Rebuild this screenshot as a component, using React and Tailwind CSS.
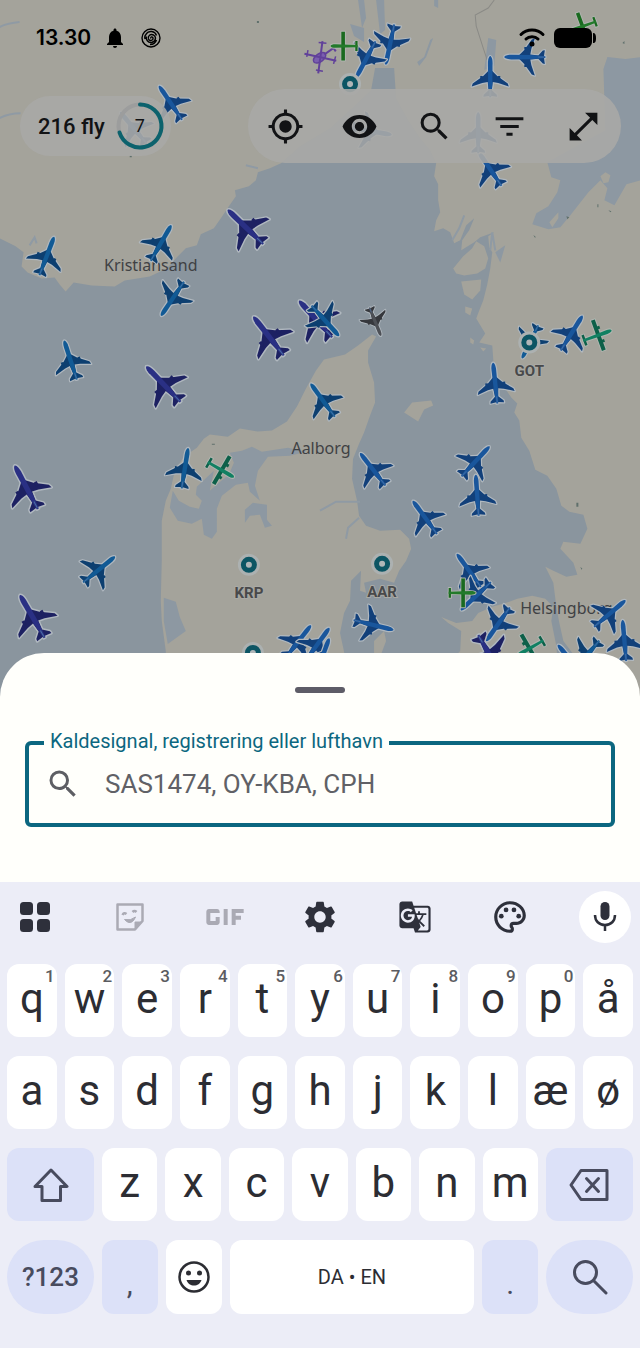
// flight map with the search sheet and keyboard open

import { useState } from 'react';
import {
  MdFilterList,
  MdGif,
  MdGpsFixed,
  MdGTranslate,
  MdNotifications,
  MdOpenInFull,
  MdOutlinePalette,
  MdSearch,
  MdSettings,
  MdVisibility,
} from 'react-icons/md';

const COLORS = {
  blue: { body: '#19569c', wing: '#12407a' },
  cyan: { body: '#115a95', wing: '#0d3f70' },
  indigo: { body: '#2a3084', wing: '#1d2162' },
  green: { body: '#118062', wing: '#0d6049' },
  lime: { body: '#237a2b', wing: '#1a6a20' },
  gray: { body: '#4d5056', wing: '#36383d' },
};

// x, y, heading in degrees, size, color
const JETS = [
  [171, 103, -34, 1, 'blue'],
  [246, 227, -46, 1.2, 'indigo'],
  [161, 243, 30, 1, 'cyan'],
  [47, 256, 21, 1, 'cyan'],
  [173, 298, 214, 1, 'cyan'],
  [71, 360, -18, 1, 'cyan'],
  [164, 384, -44, 1.2, 'indigo'],
  [269, 336, -38, 1.2, 'indigo'],
  [316, 319, -42, 1.2, 'indigo'],
  [325, 320, 138, 1, 'cyan'],
  [375, 321, 158, 0.75, 'gray'],
  [323, 400, -36, 1, 'cyan'],
  [185, 468, 9, 1, 'cyan'],
  [27, 487, -28, 1.2, 'indigo'],
  [33, 616, -30, 1.2, 'indigo'],
  [99, 569, 51, 1, 'cyan'],
  [373, 469, -38, 1, 'blue'],
  [475, 461, 43, 1, 'blue'],
  [477, 495, -4, 1, 'blue'],
  [425, 517, -36, 1, 'blue'],
  [469, 570, -36, 1, 'blue'],
  [476, 595, 227, 1, 'blue'],
  [498, 623, 215, 1, 'blue'],
  [373, 624, 104, 1, 'blue'],
  [490, 655, 150, 1.2, 'indigo'],
  [609, 613, 50, 1, 'blue'],
  [624, 640, -5, 1, 'blue'],
  [298, 641, 38, 1, 'blue'],
  [317, 644, 36, 1, 'blue'],
  [322, 657, 20, 1, 'blue'],
  [571, 660, -40, 1, 'blue'],
  [586, 655, 220, 1, 'cyan'],
  [495, 383, -6, 1, 'blue'],
  [530, 341, 206, 0.9, 'cyan'],
  [571, 333, 32, 1, 'blue'],
  [490, 77, 0, 1, 'blue'],
  [525, 57, 270, 1, 'blue'],
  [390, 44, 192, 1, 'blue'],
  [366, 59, 208, 1, 'blue'],
  [490, 169, -34, 1, 'blue'],
  [478, 133, 0, 1, 'blue'],
  [371, 131, 100, 1, 'blue'],
  [134, 128, -40, 1, 'blue'],
];

const PROPS = [
  [221, 469, 120, 1, 'green'],
  [597, 335, 70, 1, 'green'],
  [530, 647, 240, 1, 'green'],
  [462, 592, 90, 0.9, 'lime'],
  [344, 46, 270, 0.9, 'lime'],
  [583, 26, 250, 0.9, 'lime'],
];

const AIRPORTS = [
  { code: 'GOT', x: 529, y: 342, label: 375 },
  { code: 'KRP', x: 249, y: 564, label: 597 },
  { code: 'AAR', x: 382, y: 563, label: 596 },
  { x: 350, y: 84 },
  { x: 253, y: 652 },
];

const CITIES = [
  { name: 'Kristiansand', x: 151, y: 271 },
  { name: 'Aalborg', x: 321, y: 453 },
  { name: 'Helsingborg', x: 566, y: 613 },
];

const TOOLS = [
  { label: 'Min position', Icon: MdGpsFixed },
  { label: 'Vis', Icon: MdVisibility },
  { label: 'Søg', Icon: MdSearch },
  { label: 'Filtrer', Icon: MdFilterList },
  { label: 'Fuld skærm', Icon: MdOpenInFull },
];

const ROW_ONE = ['q', 'w', 'e', 'r', 't', 'y', 'u', 'i', 'o', 'p', 'å'];
const ROW_TWO = ['a', 's', 'd', 'f', 'g', 'h', 'j', 'k', 'l', 'æ', 'ø'];
const ROW_THREE = ['z', 'x', 'c', 'v', 'b', 'n', 'm'];
const HINTS = ['1', '2', '3', '4', '5', '6', '7', '8', '9', '0'];

const JET_WINGS =
  'M0-7 L2-6 L7-1 L17.5 6.5 L18.5 9.5 L8 6 L2.5 5 L1.6 13 L6.5 17.5 L6.8 19.5 L0 18.5 L-6.8 19.5 L-6.5 17.5 L-1.6 13 L-2.5 5 L-8 6 L-18.5 9.5 L-17.5 6.5 L-7-1 L-2-6Z';
const JET_BODY = 'M0-21 C1.6-20.5 2.3-17 2.3-14 L2.1 6 L0.9 20 L-0.9 20 L-2.1 6 L-2.3-14 C-2.3-17 -1.6-20.5 0-21Z';
const PROP_WINGS = 'M-16-3 L16-3 L16 1 L-16 1Z M-5.5 12.5 L5.5 12.5 L5.5 15 L-5.5 15Z';
const PROP_BODY = 'M0-15 C1.5-15 2-12 2-10 L1.2 15 L-1.2 15 L-2-10 C-2-12 -1.5-15 0-15Z';

const Jet = ({ plane: [x, y, heading, size, color] }) => (
  <g transform={`translate(${x} ${y}) rotate(${heading}) scale(${size})`} strokeLinejoin="round">
    <path d={JET_WINGS} stroke="#b0b8bf" strokeWidth="2.4" fill="none" />
    <path d={JET_BODY} stroke="#b0b8bf" strokeWidth="2.4" fill="none" />
    <path d={JET_WINGS} fill={COLORS[color].wing} />
    <path d="M-10-1h2.5v4h-2.5z M7.5-1h2.5v4h-2.5z" fill={COLORS[color].wing} />
    <path d={JET_BODY} fill={COLORS[color].body} />
    <path d="M0 13V19" stroke="#4c71a3" strokeWidth="0.8" />
  </g>
);

const PropPlane = ({ plane: [x, y, heading, size, color] }) => (
  <g transform={`translate(${x} ${y}) rotate(${heading}) scale(${size})`} strokeLinejoin="round">
    <path d={PROP_WINGS} stroke="#b0b5b0" strokeWidth="2" fill="none" />
    <path d={PROP_BODY} stroke="#b0b5b0" strokeWidth="2" fill="none" />
    <path d={PROP_WINGS} fill={COLORS[color].wing} />
    {color === 'green' && <path d="M-8.5-5h3v3h-3z M5.5-5h3v3h-3z" fill={COLORS[color].wing} />}
    <path d={PROP_BODY} fill={COLORS[color].body} />
  </g>
);

const Helicopter = () => (
  <g transform="translate(322 56) rotate(-125)" fill="none" stroke="#61419a" strokeWidth="1.5">
    <ellipse cx="0" cy="-3" rx="4" ry="7" fill="#7a5eae" />
    <path d="M0 3V15M-4 14H4M-12-13L12 9M12-13L-12 9" strokeWidth="2" />
    <path d="M-13-8L-8-13M13-8L8-13M-13 5L-8 11M13 5L8 11" />
  </g>
);

const FlightMap = () => (
  <svg
    className="absolute inset-0 h-full w-full"
    viewBox="0 0 640 696"
    preserveAspectRatio="xMidYMin slice"
    role="img"
    aria-label="Kort over fly"
  >
    <rect width="640" height="696" fill="#8a959e" />

    {/* land */}
    <g fill="#a4a39b">
      <path d="M0 0H640V696H575L572 652L563 640L559 622L556 606L553 582L545 566L553 570L566 576L577 574L573 562L560 548L563 541L580 543L587 528L583 514L569 511L561 505L556 488L547 475L535 469L529 450L521 437L519 420L514 412L517 403L511 397L503 385L494 372L492 345L479 342L485 333L476 318L479 310L483 300L487 284L490 268L492 252L489 247L488 236L494 232L480 237L474 242L461 250L462 240L469 230L474 218L466 225L460 240L454 243L450 232L443 228L434 231L436 220L440 212L438 200L438 184L434 176L436 163L430 150L420 138L408 120L396 98L394 68L375 68L371 90L352 108L330 128L300 146L281 163L270 168L258 172L256 180L249 186L235 190L236 196L229 206L221 218L214 228L201 234L197 245L186 248L178 256L167 268L150 276L125 280L115 286L92 285L74 282L66 291L60 284L55 277L42 278L28 272L22 266L24 252L16 246L0 238Z" />
      <path d="M167 696L166 650L162 620L161 600L162 560L162 520L166 500L171 488L175 470L184 456L197 447L204 438L210 434L228 436L240 428L258 431L272 430L287 421L297 406L306 388L316 370L324 359L345 354L358 345L372 334L376 336L368 350L368 362L374 382L375 402L370 415L364 432L359 443L353 458L352 478L357 500L359 515L366 525L380 530L400 529L409 538L411 548L406 560L399 570L394 582L380 578L364 582L366 592L360 590L361 570L351 580L350 600L344 612L340 632L346 660L344 696Z" />
      <path d="M441 616L456 622L472 620L478 612L492 606L506 602L517 598L532 595L545 598L553 606L551 620L556 645L560 696H452L448 662L460 650L461 630L448 622Z" />
      <path d="M404 412L412 402L431 400L433 405L424 409L418 421Z" />
      <path d="M453 268L463 256L472 248L476 241L484 246L488 258L485 268L477 273L464 275L456 273Z" />
      <path d="M461 281L481 279L480 290L472 299L464 294Z" />
      <path d="M465 306l7 2-2 7-5-3z M470 337l4 3-1 4-3-2z M480 347l6 1-3 3z" />
      <path d="M374 640L384 630L386 640L380 656L374 670Z" />
    </g>

    {/* inland water */}
    <g fill="#8d98a2">
      <path d="M603 69L607 57L625 59L640 57V180L626 184L614 205L604 200L607 188L600 180L588 192L570 215L560 227L548 229L532 224L536 213L548 206L557 192L560 180L551 177L547 162L605 130Z" />
      <path d="M230 452L242 450L252 446L262 451L288 447L306 451L290 455L268 456L258 470L255 485L260 500L250 491L248 482L236 484L222 495L217 508L217 531L212 538L204 534L202 518L192 523L178 520L170 507L173 490L179 500L190 506L199 508L202 500L196 494L197 486L214 470L210 490L219 482L229 474L234 462Z" />
      <path d="M164 597L176 601L180 616L186 630L168 643L164 620Z" />
      <path d="M245 509L253 502L267 504L267 519L272 525L265 527L260 514L250 515L245 522Z" />
      <path d="M350 24L364 28L364 42L354 36Z M358 0h6L366 18L362 28ZM376 0h8L385 30L380 34Z M430 40L433 38L426 57L419 66L417 62L424 57Z M488 38L496 40L494 66L484 70Z M434 0h4v8l-4-2z" />
      <path d="M495 252L505 245L500 262Z" />
    </g>
    <g fill="none" stroke="#8f9aa4" strokeWidth="2">
      <path d="M0 27Q8 23 20 22M0 118Q9 113 21 113M30 245L35 237L37 243M320 510L336 501L360 501M359 517L348 527L346 538M246 165L258 168M464 215L459 228L452 240M490 250L492 232L495 250" />
    </g>
    <path d="M494 0L488 8L475 15L476 26L483 48L487 60" fill="none" stroke="#8a8a86" />

    {/* islands of the lake */}
    <path d="M600 176L605 172L610 175L608 182L603 183Z M558 212L549 222L552 227L558 218Z" fill="#a4a39b" />
    <g fill="#5f706c">
      <path d="M257 21h2v2h-2zM622 43l2-2v3zM566 216l3 1-2 2zM597 204h1v3h-1zM608 210l3 1-1 1zM533 235l2 1v2zM576 502h2v4h-2zM580 566l2 2-1 1zM212 443h3v1h-3zM130 155h2v2h-2z" />
    </g>

    <g fontFamily="'Noto Sans', sans-serif" fontSize="16" textAnchor="middle" fill="#3f4144">
      {CITIES.map((city) => (
        <text key={city.name} x={city.x} y={city.y}>
          {city.name}
        </text>
      ))}
    </g>

    <Helicopter />
    {JETS.map((plane) => (
      <Jet key={`${plane[0]}-${plane[1]}`} plane={plane} />
    ))}
    {PROPS.map((plane) => (
      <PropPlane key={`${plane[0]}-${plane[1]}`} plane={plane} />
    ))}

    {AIRPORTS.map((airport) => (
      <g key={`${airport.x}-${airport.y}`}>
        <circle cx={airport.x} cy={airport.y} r="11" fill="#acb1b1" />
        <circle cx={airport.x} cy={airport.y} r="5.5" fill="#b0b6b8" stroke="#0c5564" strokeWidth="5" />
        {airport.code && (
          <text
            x={airport.x}
            y={airport.label}
            textAnchor="middle"
            fontFamily="Roboto, sans-serif"
            fontSize="15"
            fontWeight="700"
            fill="#48494b"
            stroke="#a9a9a4"
            strokeWidth="2"
            paintOrder="stroke"
          >
            {airport.code}
          </text>
        )}
      </g>
    ))}
  </svg>
);

const StatusBar = () => (
  <div className="flex h-5 items-center justify-between pr-11 pl-9 text-black">
    <div className="flex items-center gap-3">
      <span className="font-['Inter',sans-serif] text-[21px] leading-5 font-semibold">13.30</span>
      <MdNotifications className="size-6" />
      <svg className="ml-0.5 size-5" viewBox="0 0 20 20" fill="none" stroke="currentColor" strokeWidth="1.4">
        <circle cx="10" cy="10" r="9" />
        <path d="M10 10.5c-1-1.500 1.500-2.500 2-.5.5 2.500-3.500 3.500-4.500 1-1-3 2-5.500 5-4 3.500 2 2 7-2 7.500-3.500.4-6-3-5-6M5 6c3-4 9-3 10.500 1.500M15.500 12c-1 3-3.500 4.500-6.500 4.500M4 11c-.5-2 0-4 1.500-5" />
      </svg>
    </div>
    <div className="flex items-center gap-2">
      <svg className="h-5 w-7" viewBox="0 0 28 20" fill="none" stroke="currentColor" strokeWidth="3" strokeLinecap="round">
        <path d="M3 6.500C9 .5 19 .5 25 6.500M8 11C11 8 17 8 20 11" />
        <circle cx="14" cy="16" r="1" fill="currentColor" />
      </svg>
      <svg className="h-5 w-[42px]" viewBox="0 0 42 20" fill="currentColor">
        <rect width="38" height="20" rx="6" />
        <path d="M39 5c2.500 0 3 2 3 5s-.5 5-3 5z" />
      </svg>
    </div>
  </div>
);

const MapControls = () => (
  <div className="flex items-center justify-between pr-[19px] pl-5">
    <div className="flex h-[60px] items-center gap-2.5 rounded-full bg-[#a8a8a6]/90 pr-1.5 pl-[18px] text-[#121315]">
      <span className="text-[22px] font-medium">216 fly</span>
      <div className="relative flex size-[50px] items-center justify-center">
        <svg className="absolute inset-0" viewBox="0 0 50 50" fill="none" strokeWidth="4" strokeLinecap="round">
          <circle cx="25" cy="25" r="21.5" stroke="#9c9d9d" />
          <path d="M25 3.500A21.500 21.500 0 1 1 4.500 31.500" stroke="#0c626d" />
        </svg>
        <span className="relative text-lg">7</span>
      </div>
    </div>
    <div className="flex h-[74px] w-[373px] items-center rounded-full bg-[#a8a8a6]/90 text-[#121315]">
      {TOOLS.map(({ label, Icon }) => (
        <button key={label} type="button" aria-label={label} className="flex h-full flex-1 items-center justify-center">
          <Icon className="size-[37px]" />
        </button>
      ))}
    </div>
  </div>
);

const SearchSheet = () => {
  const [query, setQuery] = useState('');

  return (
    <section className="relative rounded-t-[44px] bg-[#fffffb] px-[25px] pt-[34px] pb-[55px]">
      <div className="mx-auto h-1.5 w-[50px] rounded-full bg-[#5d5c67]" />
      <div className="relative mt-12 flex h-[86px] items-center gap-6 rounded-md border-4 border-[#0c6780] px-4">
        <label
          htmlFor="flight-search"
          className="absolute -top-[18px] left-[15px] bg-[#fffffb] px-1.5 text-xl leading-7 text-[#0c6780]"
        >
          Kaldesignal, registrering eller lufthavn
        </label>
        <MdSearch className="size-9 shrink-0 text-[#5d5e63]" />
        <input
          id="flight-search"
          type="text"
          value={query}
          onChange={(e) => setQuery(e.target.value)}
          placeholder="SAS1474, OY-KBA, CPH"
          className="w-full min-w-0 bg-transparent text-[26px] outline-none placeholder:text-[#606166]"
        />
      </div>
    </section>
  );
};

const LetterKey = ({ letter, hint }) => (
  <button
    type="button"
    className="relative flex h-[73px] flex-[56_1_0%] items-center justify-center rounded-xl bg-white pb-1 text-[42px] leading-none text-[#2c2d33]"
  >
    {letter}
    {hint && <span className="absolute top-1 right-0.5 text-[17px] leading-4 font-medium text-[#5b5c61]">{hint}</span>}
  </button>
);

const KeyboardTools = () => (
  <div className="flex h-[70px] items-center justify-between px-0.5 text-[#2e303b]">
    <button type="button" aria-label="Apps" className="flex size-[52px] items-center justify-center">
      <svg className="size-[30px]" viewBox="0 0 30 30" fill="currentColor">
        <rect width="13" height="13" rx="3.5" />
        <rect x="17" width="13" height="13" rx="3.5" />
        <rect y="17" width="13" height="13" rx="3.5" />
        <rect x="17" y="17" width="13" height="13" rx="3.5" />
      </svg>
    </button>
    <button type="button" aria-label="Klistermærker" className="flex size-[52px] items-center justify-center text-[#aaaab4]">
      <svg className="size-[30px]" viewBox="0 0 30 30" fill="none" stroke="currentColor" strokeWidth="2.5" strokeLinejoin="round">
        <path d="M2.500 2.500H27.500V19L20 27.500H2.500Z" />
        <path d="M20 27V20H27Z" fill="currentColor" strokeWidth="1" />
        <path d="M9.500 17.500Q16 19 20.500 15Q18 21 14 20.500Q11.500 20 9.500 17.500Z" fill="currentColor" strokeWidth="1" />
        <path d="M7.500 13Q9 10 11.500 12M17.500 10Q19.500 8 21.500 10" strokeWidth="2.5" />
      </svg>
    </button>
    <button type="button" aria-label="GIF" className="flex size-[52px] items-center justify-center text-[#aaaab4]">
      <MdGif className="size-16 shrink-0" />
    </button>
    <button type="button" aria-label="Indstillinger" className="flex size-[52px] items-center justify-center">
      <MdSettings className="size-[38px]" />
    </button>
    <button type="button" aria-label="Oversæt" className="flex size-[52px] items-center justify-center">
      <MdGTranslate className="size-[34px]" />
    </button>
    <button type="button" aria-label="Tema" className="flex size-[52px] items-center justify-center">
      <MdOutlinePalette className="size-[38px]" />
    </button>
    <button type="button" aria-label="Tale" className="flex size-[52px] items-center justify-center rounded-full bg-white">
      <svg className="size-[34px]" viewBox="0 0 34 34" fill="none" stroke="currentColor" strokeWidth="2.5">
        <rect x="12.500" y="2" width="9" height="18" rx="4.5" fill="currentColor" stroke="none" />
        <path d="M7 15C7 21 11 25 17 25S27 21 27 15M17 25V31" />
      </svg>
    </button>
  </div>
);

const Keyboard = () => (
  <section className="flex flex-col gap-[19px] bg-[#ecedf7] px-[7px] pb-[34px]">
    <div className="-mb-[7px]">
      <KeyboardTools />
    </div>
    <div className="flex gap-2">
      {ROW_ONE.map((letter, i) => (
        <LetterKey key={letter} letter={letter} hint={HINTS[i]} />
      ))}
    </div>
    <div className="flex gap-2">
      {ROW_TWO.map((letter) => (
        <LetterKey key={letter} letter={letter} />
      ))}
    </div>
    <div className="flex gap-2">
      <button
        type="button"
        aria-label="Shift"
        className="flex h-[73px] flex-[88_1_0%] items-center justify-center rounded-xl bg-[#dce1f8] text-[#484b5e]"
      >
        <svg className="size-9" viewBox="0 0 36 36" fill="none" stroke="currentColor" strokeWidth="3" strokeLinejoin="round">
          <path d="M18 3L34 19.500H27.500V33.500H9V19.500H2Z" />
        </svg>
      </button>
      {ROW_THREE.map((letter) => (
        <LetterKey key={letter} letter={letter} />
      ))}
      <button
        type="button"
        aria-label="Slet"
        className="flex h-[73px] flex-[88_1_0%] items-center justify-center rounded-xl bg-[#dce1f8] text-[#484b5e]"
      >
        <svg className="h-9 w-10" viewBox="0 0 40 36" fill="none" stroke="currentColor" strokeWidth="3" strokeLinejoin="round">
          <path d="M12 3.500H38V32.500H12L2 18Z" />
          <path d="M17.500 11.500L29.500 24.500M29.500 11.500L17.500 24.500" strokeLinecap="round" />
        </svg>
      </button>
    </div>
    <div className="flex gap-2 text-[#484b5e]">
      <button
        type="button"
        className="flex h-[74px] flex-[87_1_0%] items-center justify-center rounded-full bg-[#dce1f8] text-[26px] font-medium"
      >
        ?123
      </button>
      <button type="button" className="flex h-[74px] flex-[56_1_0%] items-end justify-center rounded-xl bg-[#dce1f8] pb-3 text-3xl">
        ,
      </button>
      <button
        type="button"
        aria-label="Emoji"
        className="flex h-[74px] flex-[56_1_0%] items-center justify-center rounded-xl bg-white text-[#2c2d33]"
      >
        <svg className="size-8" viewBox="0 0 32 32" fill="currentColor">
          <circle cx="16" cy="16" r="14.5" fill="none" stroke="currentColor" strokeWidth="2.5" />
          <circle cx="10.5" cy="12" r="2.5" />
          <circle cx="21.5" cy="12" r="2.5" />
          <path d="M8.500 19H23.500C22 23 19.500 24.500 16 24.500S10 23 8.500 19Z" />
        </svg>
      </button>
      <button
        type="button"
        className="flex h-[74px] flex-[245_1_0%] items-center justify-center rounded-xl bg-white text-xl text-[#2c2d33]"
      >
        DA • EN
      </button>
      <button type="button" className="flex h-[74px] flex-[56_1_0%] items-end justify-center rounded-xl bg-[#dce1f8] pb-3 text-3xl">
        .
      </button>
      <button
        type="button"
        aria-label="Søg"
        className="flex h-[74px] flex-[87_1_0%] items-center justify-center rounded-full bg-[#dce1f8]"
      >
        <svg className="size-9" viewBox="0 0 36 36" fill="none" stroke="currentColor" strokeWidth="3" strokeLinecap="round">
          <circle cx="13.5" cy="13.5" r="11" />
          <path d="M21.500 21.500L34 34" />
        </svg>
      </button>
    </div>
  </section>
);

const App = () => (
  <main className="flex min-h-screen flex-col bg-[#ecedf7] font-['Roboto',sans-serif]">
    <section className="relative -mb-11 flex-1 overflow-hidden">
      <FlightMap />
      <div className="relative flex flex-col gap-[41px] pt-7">
        <StatusBar />
        <MapControls />
      </div>
    </section>
    <SearchSheet />
    <Keyboard />
  </main>
);

export default App;
